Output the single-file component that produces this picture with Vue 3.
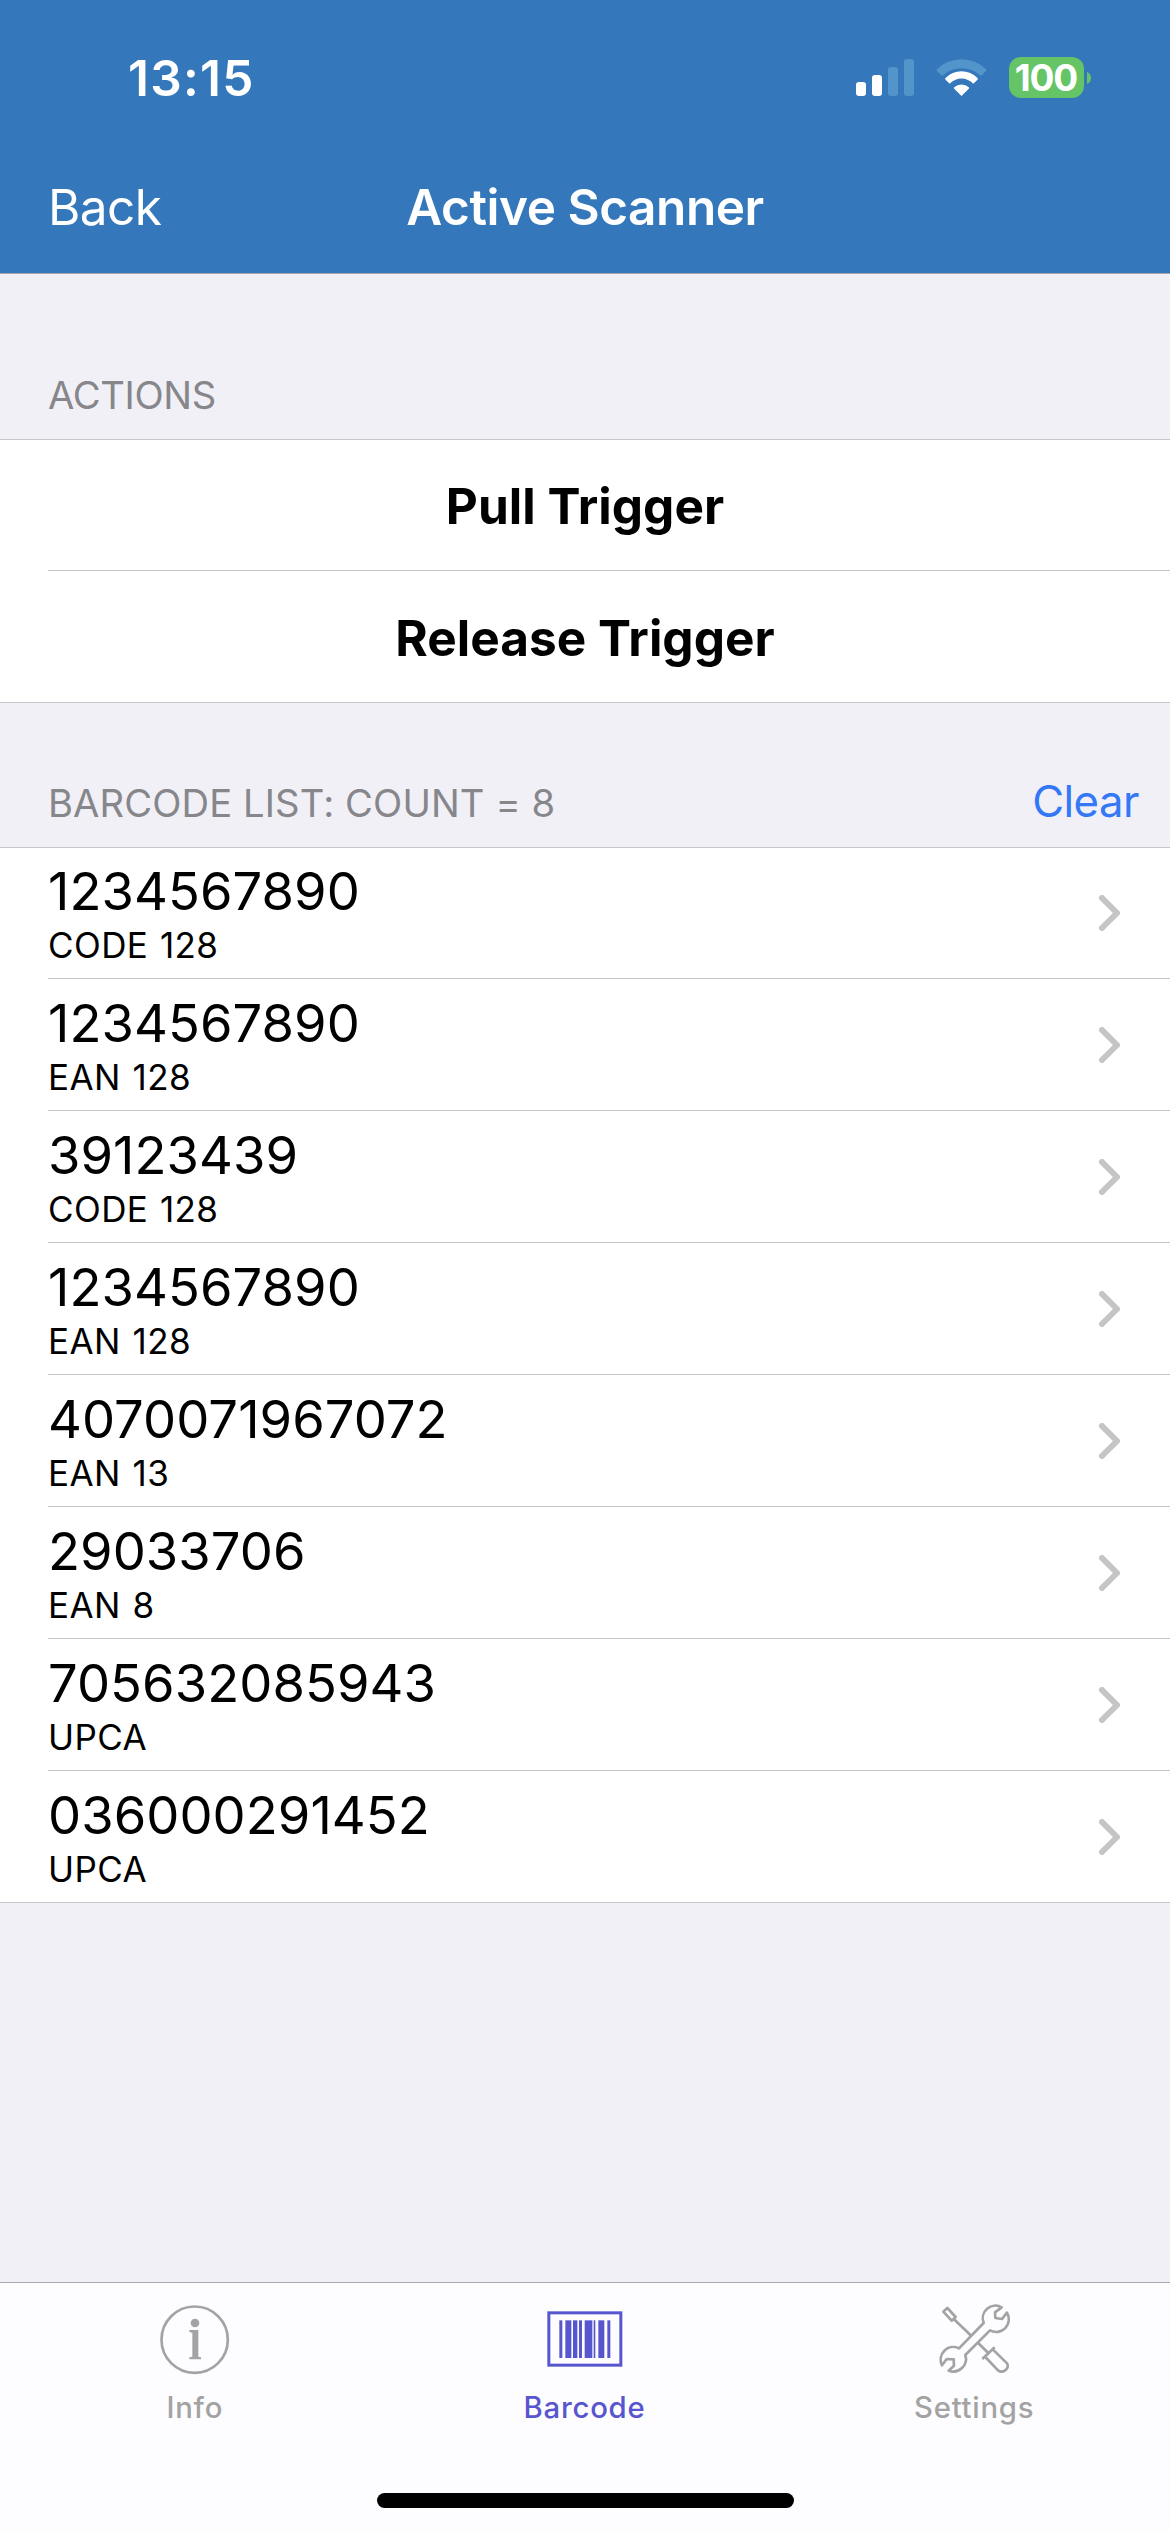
<script setup>
const actions = ['Pull Trigger', 'Release Trigger']

const barcodes = [
  { value: '1234567890', type: 'CODE 128' },
  { value: '1234567890', type: 'EAN 128' },
  { value: '39123439', type: 'CODE 128' },
  { value: '1234567890', type: 'EAN 128' },
  { value: '4070071967072', type: 'EAN 13' },
  { value: '29033706', type: 'EAN 8' },
  { value: '705632085943', type: 'UPCA' },
  { value: '036000291452', type: 'UPCA' },
]
</script>

<template>
  <div class="screen">
    <header class="header">
      <div class="status">
        <span class="time">13:15</span>
        <div class="indicators">
          <svg class="signal" viewBox="0 0 58 37">
            <rect x="0" y="23" width="10" height="14" rx="3" fill="#fff" />
            <rect x="16" y="16" width="10" height="21" rx="3" fill="#fff" />
            <rect x="32" y="8" width="10" height="29" rx="3" fill="#5195cb" />
            <rect x="48" y="0" width="10" height="37" rx="3" fill="#5195cb" />
          </svg>
          <svg class="wifi" viewBox="0 0 51 37">
            <path d="M0.9 10.2A35.2 35.2 0 0 1 50.1 10.2Q50.8 11 50.1 11.7L45.6 16.5Q45 17 44.4 16.5A28 28 0 0 0 6.6 16.5Q6 17 5.4 16.5L0.9 11.7Q0.2 11 0.9 10.2Z" fill="#5195cb" />
            <path d="M9.5 19A22.4 22.4 0 0 1 41.5 19Q42.2 20 41.5 20.7L37.3 24.7A16.2 16.2 0 0 0 13.7 24.7L9.5 20.7Q8.8 20 9.5 19Z" fill="#fff" />
            <path d="M18.2 28.2A11 11 0 0 1 32.8 28.2Q33.4 29 32.8 29.8L25.5 37L18.2 29.8Q17.6 29 18.2 28.2Z" fill="#fff" />
          </svg>
          <div class="battery">
            <span class="level">100</span>
            <svg class="nub" viewBox="0 0 4 12"><path d="M0 0Q4 1.6 4 6T0 12Z" fill="#65c466" /></svg>
          </div>
        </div>
      </div>
      <nav class="nav">
        <a class="back">Back</a>
        <h1 class="title">Active Scanner</h1>
      </nav>
    </header>

    <main class="content">
      <div class="section-head first-head">
        <h2>ACTIONS</h2>
      </div>
      <ul class="group">
        <li v-for="a in actions" :key="a" class="row action">{{ a }}</li>
      </ul>

      <div class="section-head">
        <h2 class="list-title">BARCODE LIST: COUNT = {{ barcodes.length }}</h2>
        <a class="clear">Clear</a>
      </div>
      <ul class="group">
        <li v-for="(b, i) in barcodes" :key="i" class="row item">
          <div class="text">
            <span class="value">{{ b.value }}</span>
            <span class="type">{{ b.type }}</span>
          </div>
          <svg class="chevron" viewBox="0 0 21 36">
            <path d="M3 3L18 18L3 33" fill="none" stroke="#c5c5c7" stroke-width="6" stroke-linecap="round" stroke-linejoin="round" />
          </svg>
        </li>
      </ul>
    </main>

    <footer class="tabbar">
      <div class="tabs">
        <a class="tab">
          <svg class="icon" viewBox="53 98 220 220" fill="none" stroke="currentColor">
            <circle cx="163" cy="208" r="99.5" stroke-width="8" />
            <circle cx="164" cy="158" r="13" fill="currentColor" stroke="none" />
            <path d="M147 179H174V259L182 261V267H147V261L156 259V187L147 185Z" fill="currentColor" stroke="none" />
          </svg>
          <span>Info</span>
        </a>
        <a class="tab active">
          <svg class="icon" viewBox="113 98 220 220" fill="currentColor">
            <rect x="115.5" y="127.5" width="216" height="157" fill="none" stroke="currentColor" stroke-width="9" />
            <rect x="147" y="150" width="9" height="113" />
            <rect x="165" y="150" width="18" height="113" />
            <rect x="188" y="150" width="13" height="113" />
            <rect x="206" y="150" width="9" height="113" />
            <rect x="223" y="150" width="23" height="113" />
            <rect x="250" y="150" width="5" height="113" />
            <rect x="264" y="150" width="18" height="113" />
            <rect x="291" y="150" width="9" height="113" />
          </svg>
          <span>Barcode</span>
        </a>
        <a class="tab">
          <svg class="icon" viewBox="110 98 220 220" fill="none" stroke="currentColor" stroke-width="8" stroke-linejoin="round">
            <path d="M301 111A38 38 0 0 0 247 158L173 234A38 38 0 0 0 122 285L136 266L157 267L158 286L142 301A38 38 0 0 0 192 254L266 180A38 38 0 0 0 317 127L302 146L282 143L281 126Z" />
            <path d="M126 124L138 113L163 140L151 151ZM158 147L208 195M228 216L261 248M243 266L280 231M252 260L290 300A18 18 0 0 0 318 280L275 238" />
          </svg>
          <span>Settings</span>
        </a>
      </div>
      <div class="home"></div>
    </footer>
  </div>
</template>

<style>
body {
  margin: 0;
}
</style>

<style scoped>
.screen {
  width: 1170px;
  height: 2532px;
  display: flex;
  flex-direction: column;
  overflow: hidden;
  background: #f1f0f6;
  color: #000;
  font-family: Inter, "Liberation Sans", sans-serif;
  white-space: nowrap;
}
.header {
  height: 273px;
  background: #3478bb;
  border-bottom: 1px solid #a7a7ac;
  color: #fff;
}
.status {
  height: 155px;
  padding: 0 79px 0 128px;
  display: flex;
  align-items: center;
  justify-content: space-between;
}
.time {
  padding-top: 1px;
  font-size: 49.5px;
  line-height: 60px;
  font-weight: 600;
  letter-spacing: 1.3px;
}
.indicators {
  display: flex;
  align-items: center;
  gap: 22px;
}
.signal {
  width: 58px;
  height: 37px;
}
.wifi {
  width: 51px;
  height: 37px;
}
.battery {
  display: flex;
  align-items: center;
  gap: 3px;
}
.level {
  box-sizing: border-box;
  width: 75px;
  height: 41px;
  padding-right: 1px;
  border-radius: 12px;
  background: #65c466;
  font-size: 37px;
  line-height: 41px;
  font-weight: 700;
  letter-spacing: -1.2px;
  text-align: center;
}
.nub {
  width: 4px;
  height: 12px;
}
.nav {
  height: 104px;
  padding: 0 48px;
  display: grid;
  grid-template-columns: 1fr auto 1fr;
  align-items: center;
}
.back {
  font-size: 49.5px;
  line-height: 60px;
  letter-spacing: -0.6px;
}
.title {
  margin: 0;
  font-size: 49.5px;
  line-height: 60px;
  font-weight: 600;
  letter-spacing: -0.45px;
}
.content {
  flex: 1;
}
.section-head {
  box-sizing: border-box;
  height: 144px;
  padding: 0 31px 19px 48px;
  display: flex;
  align-items: flex-end;
  justify-content: space-between;
}
.first-head {
  height: 165px;
}
h2 {
  margin: 0;
  font-size: 38.2px;
  line-height: 50px;
  font-weight: 400;
  color: #86868b;
  letter-spacing: -0.35px;
}
.list-title {
  letter-spacing: 0.1px;
}
.clear {
  font-size: 43.7px;
  line-height: 52px;
  color: #3478f6;
  letter-spacing: -0.5px;
}
.group {
  margin: 0;
  padding: 0;
  list-style: none;
  background: #fff;
  border-top: 1px solid #c6c6c8;
  border-bottom: 1px solid #c6c6c8;
}
.row {
  box-sizing: border-box;
  height: 132px;
  margin-left: 48px;
  border-bottom: 1px solid #c6c6c8;
  display: flex;
}
.row:first-child {
  height: 131px;
}
.row:last-child {
  height: 131px;
  border-bottom: 0;
}
.action {
  padding: 2px 48px 0 0;
  align-items: center;
  justify-content: center;
  font-size: 49.5px;
  font-weight: 700;
  letter-spacing: 0.05px;
}
.item {
  padding: 12px 50px 0 0;
  justify-content: space-between;
}
.item:first-child {
  padding-top: 11px;
}
.text {
  display: flex;
  flex-direction: column;
}
.value {
  font-size: 52.5px;
  line-height: 64px;
  letter-spacing: 0.05px;
}
.type {
  font-size: 35px;
  line-height: 45px;
  letter-spacing: 0.4px;
  word-spacing: 1.5px;
}
.chevron {
  width: 21px;
  height: 36px;
  margin-top: 36px;
}
.tabbar {
  box-sizing: border-box;
  height: 250px;
  background: #fdfdff;
  border-top: 1px solid #a9a9ac;
  display: flex;
  flex-direction: column;
  justify-content: space-between;
  align-items: center;
  padding: 20px 0 24px;
}
.tabs {
  width: 1169px;
  margin-right: 1px;
  display: flex;
}
.tab {
  flex: 1;
  display: flex;
  flex-direction: column;
  align-items: center;
  color: #a3a3a3;
}
.active {
  color: #5856ce;
}
.icon {
  width: 73.33px;
  height: 73.33px;
  overflow: visible;
}
.tab span {
  margin-top: 13px;
  font-size: 29.3px;
  line-height: 38px;
  font-weight: 500;
  letter-spacing: 0.75px;
}
.home {
  width: 417px;
  height: 15px;
  border-radius: 8px;
  background: #000;
}
</style>
